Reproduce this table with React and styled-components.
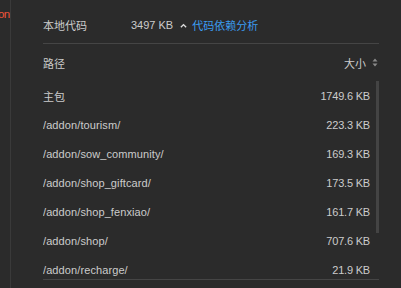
import React from 'react'
import styled, { createGlobalStyle } from 'styled-components'

const GlobalStyle = createGlobalStyle`
  html, body {
    margin: 0;
    padding: 0;
    background: #2b2b2b;
  }
  body {
    font-family: "Liberation Sans", "Noto Sans CJK SC", sans-serif;
    color: #cccccc;
  }
`

const rows = [
  { path: '主包', size: '1749.6 KB' },
  { path: '/addon/tourism/', size: '223.3 KB' },
  { path: '/addon/sow_community/', size: '169.3 KB' },
  { path: '/addon/shop_giftcard/', size: '173.5 KB' },
  { path: '/addon/shop_fenxiao/', size: '161.7 KB' },
  { path: '/addon/shop/', size: '707.6 KB' },
  { path: '/addon/recharge/', size: '21.9 KB' },
]

const App = () => (
  <>
    <GlobalStyle />
    <Layout>
      <Gutter>
        <Cut>on</Cut>
      </Gutter>
      <Panel>
        <Header>
          <Label>本地代码</Label>
          <Total>3497 KB</Total>
          <Caret viewBox="0 0 8 5">
            <path d="M1 4.5 L4 1.5 L7 4.5" fill="none" stroke="#dddddd" strokeWidth="1.6" />
          </Caret>
          <Link>代码依赖分析</Link>
        </Header>
        <ColHead>
          <span>路径</span>
          <SortHead>
            大小
            <svg width="6" height="9" viewBox="0 0 6 9">
              <path d="M3 0.5 L5.5 3.5 H0.5 Z M3 8.5 L5.5 5.5 H0.5 Z" fill="#8a8a8a" />
            </svg>
          </SortHead>
        </ColHead>
        <Body>
          {rows.map((r) => (
            <Row key={r.path}>
              <span>{r.path}</span>
              <Size>{r.size}</Size>
            </Row>
          ))}
          <Thumb />
        </Body>
      </Panel>
    </Layout>
  </>
)

export default App

const Layout = styled.div`
  display: flex;
  height: 288px;
  overflow: hidden;
`
const Gutter = styled.div`
  width: 10px;
  border-right: 1px solid #3a3a3a;
  overflow: hidden;
  flex-shrink: 0;
`
const Cut = styled.div`
  margin: 8px 0 0 -2px;
  color: #f0543a;
  font-size: 11.5px;
  letter-spacing: -0.6px;
  white-space: nowrap;
`
const Panel = styled.div`
  flex: 1;
  padding: 7px 22px 0 32px;
  display: flex;
  flex-direction: column;
`
const Header = styled.div`
  display: flex;
  align-items: center;
  height: 36px;
  border-bottom: 1px solid #454545;
  font-size: 11px;
`
const Label = styled.span`
  width: 88px;
  color: #cccccc;
`
const Total = styled.span`
  color: #cccccc;
`
const Caret = styled.svg`
  width: 7px;
  height: 5px;
  margin: 0 5px 0 7px;
`
const Link = styled.span`
  color: #3b9cf0;
`
const ColHead = styled.div`
  display: flex;
  justify-content: space-between;
  align-items: center;
  height: 37px;
  font-size: 11px;
  color: #cccccc;
  padding-right: 1px;
`
const SortHead = styled.span`
  display: flex;
  align-items: center;
  gap: 6px;
`
const Body = styled.div`
  position: relative;
  height: 198px;
  overflow: hidden;
  border-bottom: 1px solid #454545;
`
const Row = styled.div`
  display: flex;
  justify-content: space-between;
  align-items: center;
  height: 29px;
  padding-right: 9px;
  font-size: 11px;
  letter-spacing: 0.1px;
`
const Size = styled.span`
  color: #cccccc;
  letter-spacing: -0.2px;
`
const Thumb = styled.div`
  position: absolute;
  top: 0;
  right: 0;
  width: 3px;
  height: 152px;
  background: #444444;
`
